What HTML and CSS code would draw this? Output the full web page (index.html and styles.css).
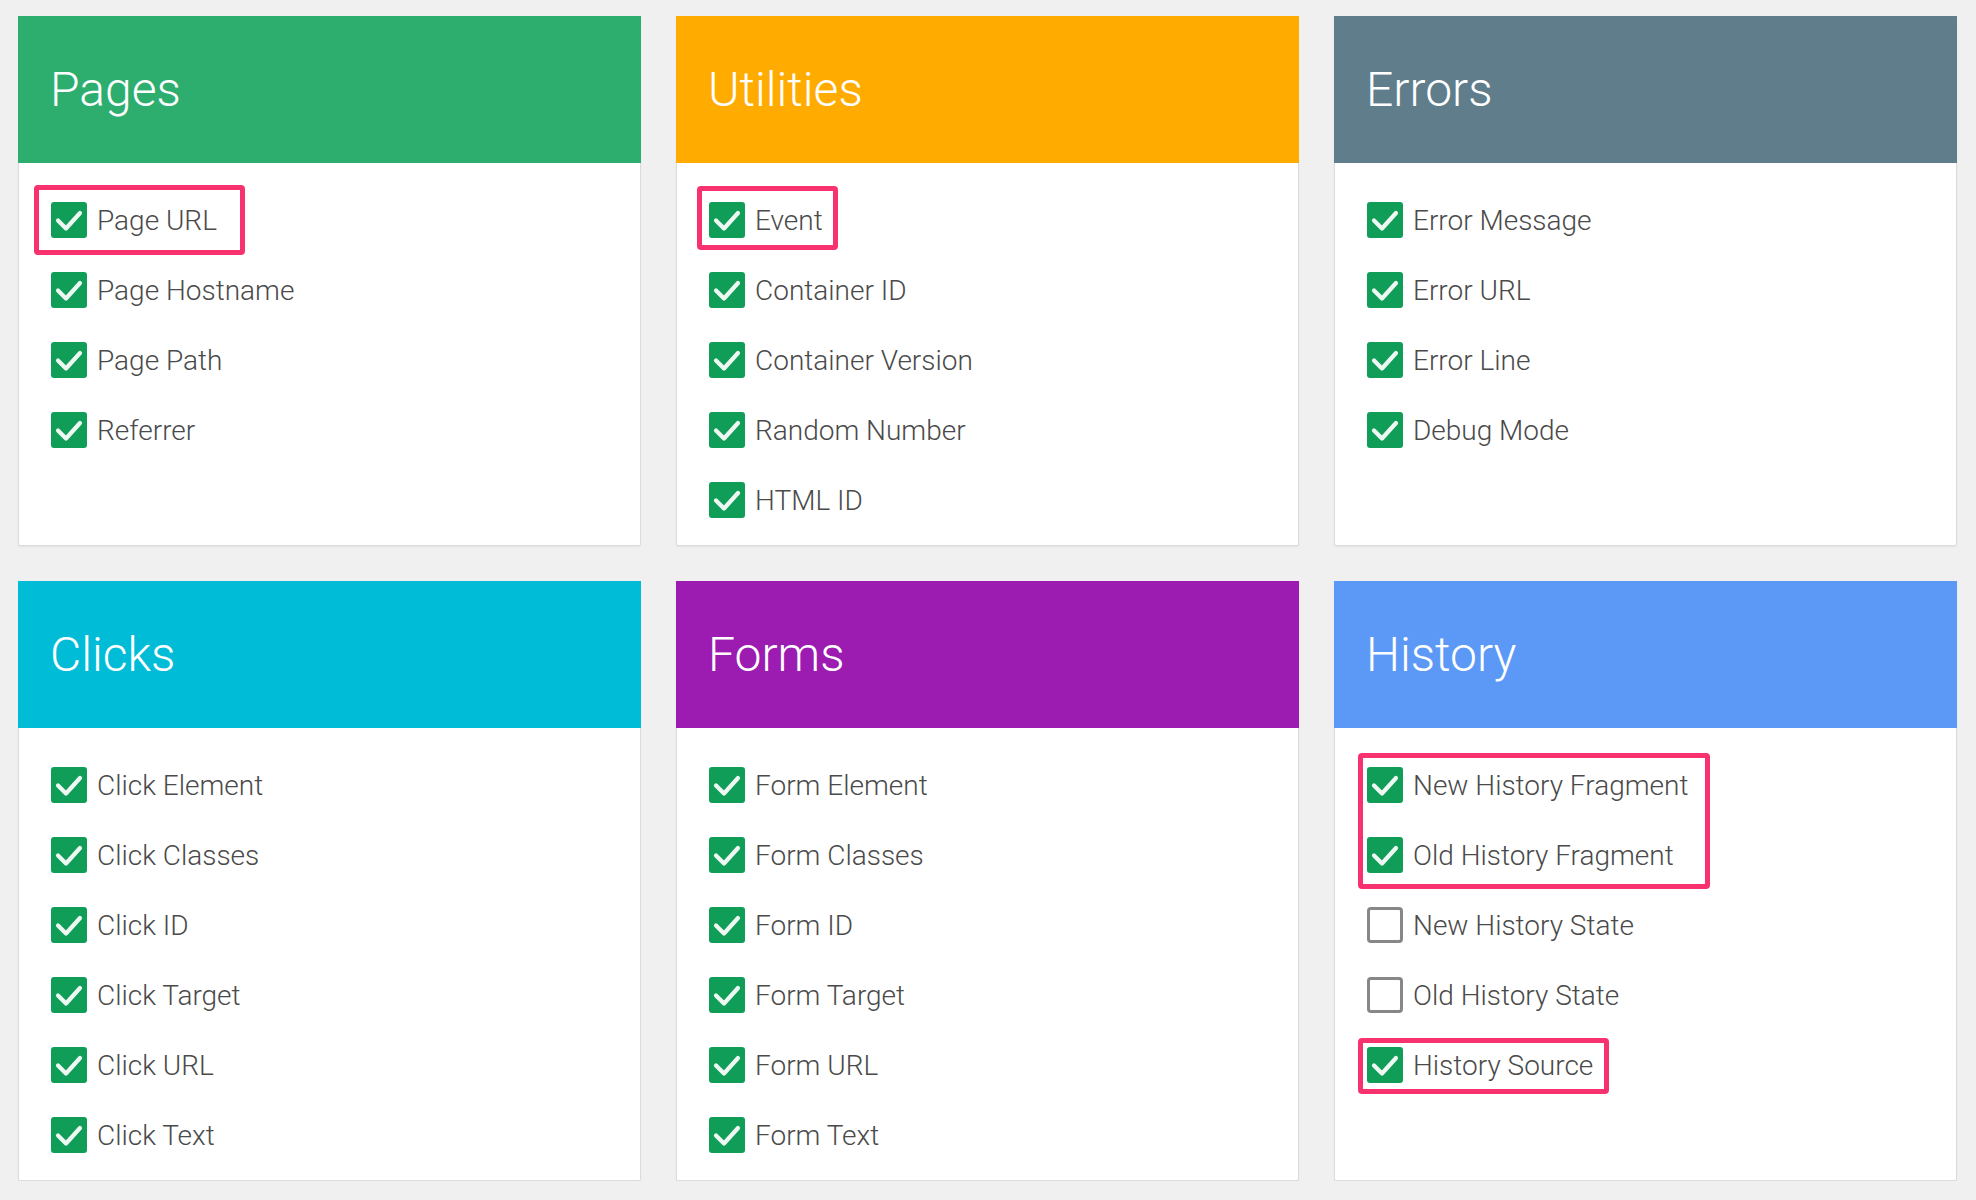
FILE: index.html
```html
<!DOCTYPE html>
<html>
<head>
<meta charset="utf-8">
<link rel="stylesheet" href="styles.css">
</head>
<body>
<svg width="0" height="0" style="position:absolute">
  <defs>
    <symbol id="chk" viewBox="0 0 36 36">
      <rect x="0" y="0" width="36" height="36" rx="3" fill="#0f9d58"/>
      <path d="M7 18.5 L15 26.5 L29 11" fill="none" stroke="#eef8f2" stroke-width="4.2" stroke-linecap="round" stroke-linejoin="round"/>
    </symbol>
  </defs>
</svg>
<main class="grid">
  <section class="card">
    <header class="head pages">Pages</header>
    <div class="list">
      <div class="item mark m-pageurl"><svg class="box"><use href="#chk"/></svg><span>Page URL</span></div>
      <div class="item"><svg class="box"><use href="#chk"/></svg><span>Page Hostname</span></div>
      <div class="item"><svg class="box"><use href="#chk"/></svg><span>Page Path</span></div>
      <div class="item"><svg class="box"><use href="#chk"/></svg><span>Referrer</span></div>
    </div>
  </section>
  <section class="card">
    <header class="head utilities">Utilities</header>
    <div class="list">
      <div class="item mark m-event"><svg class="box"><use href="#chk"/></svg><span>Event</span></div>
      <div class="item"><svg class="box"><use href="#chk"/></svg><span>Container ID</span></div>
      <div class="item"><svg class="box"><use href="#chk"/></svg><span>Container Version</span></div>
      <div class="item"><svg class="box"><use href="#chk"/></svg><span>Random Number</span></div>
      <div class="item"><svg class="box"><use href="#chk"/></svg><span>HTML ID</span></div>
    </div>
  </section>
  <section class="card">
    <header class="head errors">Errors</header>
    <div class="list">
      <div class="item"><svg class="box"><use href="#chk"/></svg><span>Error Message</span></div>
      <div class="item"><svg class="box"><use href="#chk"/></svg><span>Error URL</span></div>
      <div class="item"><svg class="box"><use href="#chk"/></svg><span>Error Line</span></div>
      <div class="item"><svg class="box"><use href="#chk"/></svg><span>Debug Mode</span></div>
    </div>
  </section>
  <section class="card">
    <header class="head clicks">Clicks</header>
    <div class="list">
      <div class="item"><svg class="box"><use href="#chk"/></svg><span>Click Element</span></div>
      <div class="item"><svg class="box"><use href="#chk"/></svg><span>Click Classes</span></div>
      <div class="item"><svg class="box"><use href="#chk"/></svg><span>Click ID</span></div>
      <div class="item"><svg class="box"><use href="#chk"/></svg><span>Click Target</span></div>
      <div class="item"><svg class="box"><use href="#chk"/></svg><span>Click URL</span></div>
      <div class="item"><svg class="box"><use href="#chk"/></svg><span>Click Text</span></div>
    </div>
  </section>
  <section class="card">
    <header class="head forms">Forms</header>
    <div class="list">
      <div class="item"><svg class="box"><use href="#chk"/></svg><span>Form Element</span></div>
      <div class="item"><svg class="box"><use href="#chk"/></svg><span>Form Classes</span></div>
      <div class="item"><svg class="box"><use href="#chk"/></svg><span>Form ID</span></div>
      <div class="item"><svg class="box"><use href="#chk"/></svg><span>Form Target</span></div>
      <div class="item"><svg class="box"><use href="#chk"/></svg><span>Form URL</span></div>
      <div class="item"><svg class="box"><use href="#chk"/></svg><span>Form Text</span></div>
    </div>
  </section>
  <section class="card">
    <header class="head history">History</header>
    <div class="list">
      <div class="group mark m-group">
        <div class="item"><svg class="box"><use href="#chk"/></svg><span>New History Fragment</span></div>
        <div class="item"><svg class="box"><use href="#chk"/></svg><span>Old History Fragment</span></div>
      </div>
      <div class="item"><span class="empty"></span><span>New History State</span></div>
      <div class="item"><span class="empty"></span><span>Old History State</span></div>
      <div class="item mark m-source"><svg class="box"><use href="#chk"/></svg><span>History Source</span></div>
    </div>
  </section>
</main>
</body>
</html>
```

FILE: styles.css
```css
html, body {
  margin: 0;
  padding: 0;
  background: #f0f0f0;
}
body {
  font-family: Roboto, "Liberation Sans", sans-serif;
}
.grid {
  display: grid;
  grid-template-columns: repeat(3, 623px);
  column-gap: 35px;
  row-gap: 35px;
  padding: 16px 0 0 18px;
}
.card {
  background: #fff;
  border: 1px solid #dcdcdc;
  border-radius: 2px;
  box-shadow: 0 1px 2px rgba(0,0,0,0.06);
  display: flex;
  flex-direction: column;
}
.head {
  height: 147px;
  display: flex;
  align-items: center;
  padding-left: 32px;
  color: #fff;
  font-weight: 300;
  font-size: 48px;
  margin: -1px -1px 0 -1px;
}
.pages { background: #2dae6f; }
.utilities { background: #ffab00; }
.errors { background: #607d8c; }
.clicks { background: #00bcd6; }
.forms { background: #9c1bb1; }
.history { background: #5c99f6; }
.list {
  padding: 22px 0 10px 32px;
  display: flex;
  flex-direction: column;
  align-items: flex-start;
}
.item {
  height: 70px;
  display: flex;
  align-items: center;
  gap: 10px;
  font-size: 28px;
  font-weight: 300;
  color: #4a4a4a;
  white-space: nowrap;
}
.box {
  width: 36px;
  height: 36px;
  flex: none;
}
.empty {
  width: 36px;
  height: 36px;
  box-sizing: border-box;
  border: 3px solid #878787;
  border-radius: 4px;
  flex: none;
}
.mark, .group {
  position: relative;
}
.mark::after {
  content: "";
  position: absolute;
  border: 5px solid #f7326e;
  border-radius: 4px;
  pointer-events: none;
}
.m-pageurl::after { left: -17px; right: -28px; top: 0; bottom: 0; }
.m-event::after { left: -12px; right: -15px; top: 1px; bottom: 5px; }
.m-group::after { left: -9px; right: -22px; top: 3px; bottom: 1px; }
.m-source::after { left: -9px; right: -16px; top: 8px; bottom: 6px; }
```
